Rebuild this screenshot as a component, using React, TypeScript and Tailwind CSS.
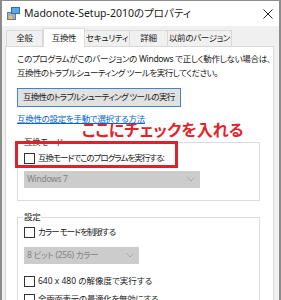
import React from "react";

const jp = "font-['Noto_Sans','Noto_Sans_CJK_JP',sans-serif] [font-feature-settings:'palt']";

const Check = ({ label, tight = "" }: { label: string; tight?: string }) => (
  <div className="flex items-center gap-[3px] h-[14px]">
    <span className="w-[11px] h-[11px] border border-[#333] bg-white shrink-0" />
    <span className={`whitespace-nowrap ${tight}`}>{label}</span>
  </div>
);

const Select = ({ value, width }: { value: string; width: string }) => (
  <div className={`${width} h-[17px] bg-[#cccccc] flex items-center justify-between pl-[3px] pr-[5px] text-[#838383]`}>
    <span>{value}</span>
    <svg width="8" height="5" viewBox="0 0 8 5" fill="none">
      <path d="M0.5 0.5 L4 4 L7.5 0.5" stroke="#a8a8a8" strokeWidth="1" />
    </svg>
  </div>
);

export default function App() {
  const tabs = ["全般", "互換性", "セキュリティ", "詳細", "以前のバージョン"];
  const widths = ["w-[37px]", "w-[42px]", "w-[45px]", "w-[38px]", "w-[64px]"];

  return (
    <div className={`w-[281px] h-[300px] overflow-hidden bg-[#f0f0f0] border-t border-l-2 border-r-2 border-[#8c8c8c] text-[8.5px] tracking-[-0.3px] text-[#1a1a1a] ${jp}`}>
      {/* title bar */}
      <div className="h-[25px] bg-white flex items-center pl-[4px] pr-[6px] tracking-normal">
        <svg width="15" height="15" viewBox="0 0 15 15" className="shrink-0">
          <rect x="1" y="6" width="9" height="8" fill="#6c7a89" />
          <rect x="2" y="7" width="7" height="6" fill="#9fb0c2" />
          <rect x="5" y="1" width="9" height="7" fill="#2a6fb5" />
          <rect x="6" y="2" width="7" height="5" fill="#5ea6e6" />
          <rect x="3" y="10" width="3" height="3" fill="#f2c14e" />
        </svg>
        <span className="ml-[3px] text-[10.5px]">Madonote-Setup-2010のプロパティ</span>
        <svg width="10" height="10" viewBox="0 0 10 10" className="ml-auto">
          <path d="M0.5 0.5 L9.5 9.5 M9.5 0.5 L0.5 9.5" stroke="#222" strokeWidth="1" />
        </svg>
      </div>

      <div className="pl-[3px] pr-[5px]">
        {/* tabs */}
        <div className="flex items-end h-[20px] pl-[1px] text-[8.5px] whitespace-nowrap">
          {tabs.map((t, i) =>
            i === 1 ? (
              <div key={t} className={`${widths[i]} h-[19px] bg-white border border-b-0 border-[#d9d9d9] flex items-center justify-center relative z-10 -mb-px`}>
                {t}
              </div>
            ) : (
              <div key={t} className={`${widths[i]} h-[16px] border border-b-0 border-[#d9d9d9] flex items-center justify-center ${i === 0 ? "" : "border-l-0"}`}>
                {t}
              </div>
            )
          )}
        </div>

        {/* panel */}
        <div className="relative bg-white border border-[#d9d9d9] h-[260px] pl-[11px] pr-[13px] pt-[5px]">
          <p className="leading-[14px] whitespace-nowrap">
            このプログラムがこのバージョンの Windows で正しく動作しない場合は、
            <br />
            <span className="tracking-[-0.5px]">互換性のトラブルシューティング ツールを実行してください。</span>
          </p>
          <button className="mt-[8px] h-[19px] px-[5px] bg-[#e1e1e1] border border-[#3c86cf] text-[8.5px] tracking-[-0.7px]">
            互換性のトラブルシューティング ツールの実行
          </button>
          <div className="mt-[5px] text-[#0066cc] underline leading-[14px]">互換性の設定を手動で選択する方法</div>

          <fieldset className="mt-[10px] border border-[#dcdcdc] pl-[6px] pb-[12px]">
            <legend className="ml-[-1px] px-[1px] leading-[12px]">互換モード</legend>
            <div className="mt-[3px]">
              <Check label="互換モードでこのプログラムを実行する:" tight="tracking-[-1px]" />
            </div>
            <div className="mt-[6px]">
              <Select value="Windows 7" width="w-[176px]" />
            </div>
          </fieldset>

          <fieldset className="mt-[10px] border border-[#dcdcdc] pl-[6px] pb-[10px]">
            <legend className="ml-[-1px] px-[1px] leading-[12px]">設定</legend>
            <div className="mt-[2px] flex flex-col">
              <Check label="カラー モードを制限する" tight="tracking-[-1px]" />
              <div className="mt-[8px]">
                <Select value="8 ビット (256) カラー" width="w-[115px]" />
              </div>
              <div className="mt-[10px]">
                <Check label="640 x 480 の解像度で実行する" tight="tracking-[0px]" />
              </div>
              <div className="mt-[4px]">
                <Check label="全画面表示の最適化を無効にする" />
              </div>
            </div>
          </fieldset>

          {/* annotation */}
          <div className="absolute left-[76px] top-[73px] text-[16px] font-bold tracking-normal text-[#e3232c] font-['Noto_Sans_CJK_JP',sans-serif] leading-[18px]">
            ここにチェックを入れる
          </div>
          <div className="absolute left-[9px] top-[94px] w-[163px] h-[27px] border-[3px] border-[#d9232d]" />
        </div>
      </div>
    </div>
  );
}
